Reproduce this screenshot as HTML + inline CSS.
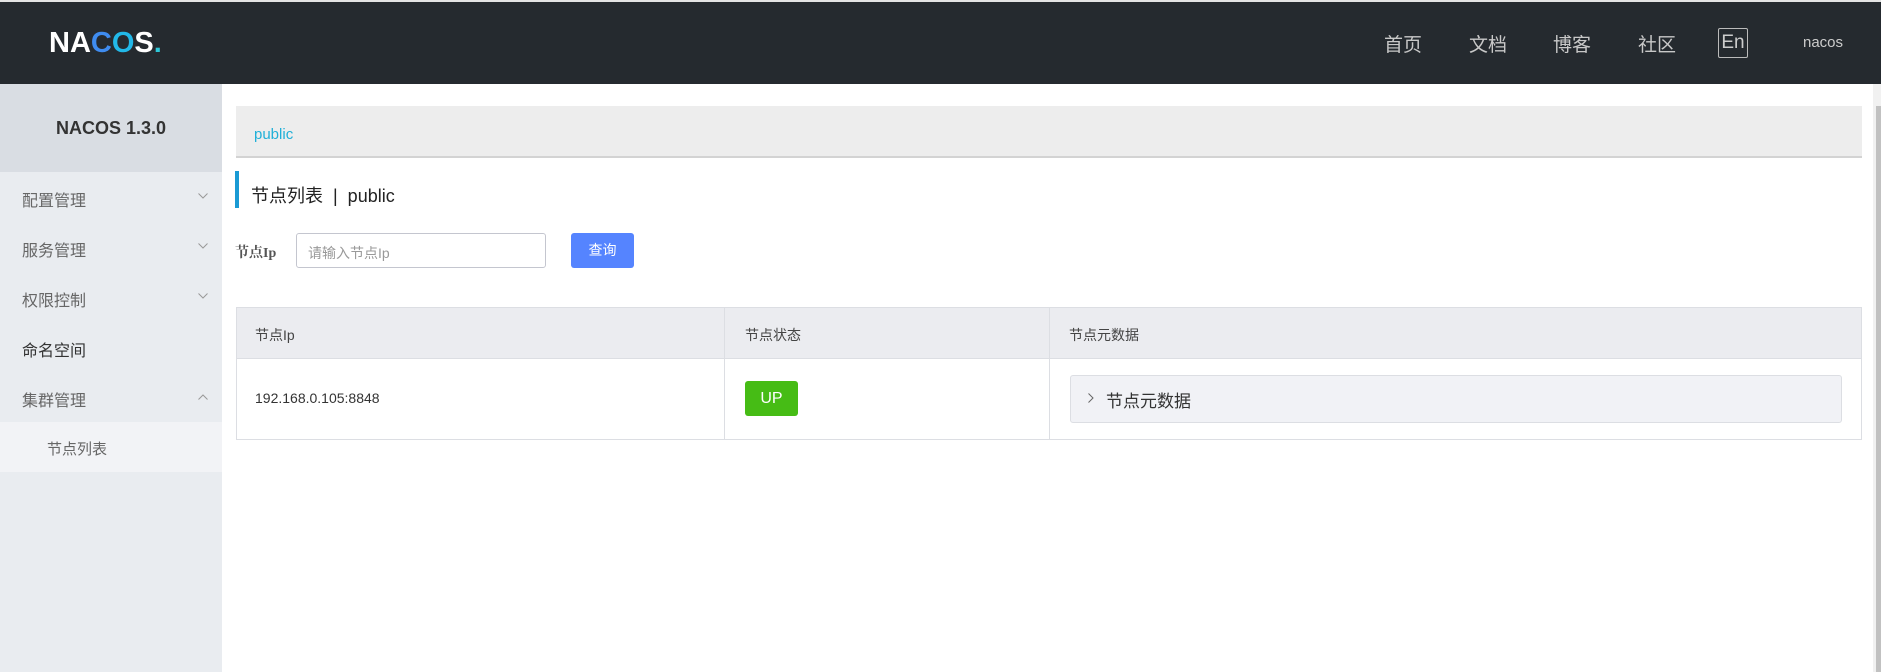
<!DOCTYPE html>
<html><head><meta charset="utf-8"><style>
*{box-sizing:border-box;margin:0;padding:0}
body{width:1881px;height:672px;overflow:hidden;background:#fff;font-family:"Liberation Sans","Noto Sans CJK SC",sans-serif;position:relative}
.a{position:absolute}
.hdr{left:0;top:0;width:1881px;height:84px;background:#252a2f;border-top:2px solid #e4e4e4}
.nav{color:#c8c8c8;font-size:19px;top:30px}
.side{left:0;top:84px;width:222px;height:588px;background:#e9ecf0}
.stitle{left:0;top:84px;width:222px;height:88px;background:#d9dde3;font-weight:bold;font-size:18px;color:#333;text-align:center;line-height:88px}
.mi{left:22px;font-size:16px;color:#666}
.ch{left:198px}
.th{font-size:14px;color:#444;top:325px}
</style></head><body>
<div class="a hdr"></div>
<div class="a" style="left:49px;top:27px;font-size:29px;font-weight:bold;letter-spacing:0px;color:#fff;font-family:'Liberation Sans',sans-serif">NA<span style="color:#3f8cf0">C</span><span style="color:#22b8e8">O</span>S<span style="color:#2ec7d8">.</span></div>
<div class="a nav" style="left:1384px">首页</div>
<div class="a nav" style="left:1469px">文档</div>
<div class="a nav" style="left:1553px">博客</div>
<div class="a nav" style="left:1638px">社区</div>
<div class="a" style="left:1718px;top:28px;width:30px;height:30px;border:1px solid #bbb;border-radius:2px;color:#ccc;font-size:19px;text-align:center;line-height:28px">En</div>
<div class="a" style="left:1803px;top:34px;color:#ccc;font-size:15px">nacos</div>

<div class="a side"></div>
<div class="a stitle">NACOS 1.3.0</div>
<div class="a mi" style="top:187px">配置管理</div><svg class="a ch" style="top:193px" width="10" height="6"><path d="M0.5 0.5L5 5L9.5 0.5" fill="none" stroke="#999" stroke-width="1"/></svg>
<div class="a mi" style="top:237px">服务管理</div><svg class="a ch" style="top:243px" width="10" height="6"><path d="M0.5 0.5L5 5L9.5 0.5" fill="none" stroke="#999" stroke-width="1"/></svg>
<div class="a mi" style="top:287px">权限控制</div><svg class="a ch" style="top:293px" width="10" height="6"><path d="M0.5 0.5L5 5L9.5 0.5" fill="none" stroke="#999" stroke-width="1"/></svg>
<div class="a mi" style="top:337px;color:#333">命名空间</div>
<div class="a mi" style="top:387px">集群管理</div><svg class="a ch" style="top:394px" width="10" height="6"><path d="M0.5 5.5L5 1L9.5 5.5" fill="none" stroke="#999" stroke-width="1"/></svg>
<div class="a" style="left:0;top:422px;width:222px;height:50px;background:#f2f3f6"></div>
<div class="a mi" style="left:47px;top:438px;font-size:15px">节点列表</div>

<div class="a" style="left:1873px;top:84px;width:8px;height:588px;background:#f1f1f1"></div>
<div class="a" style="left:1876px;top:106px;width:5px;height:566px;background:#c1c1c1"></div>

<div class="a" style="left:236px;top:106px;width:1626px;height:52px;background:#ededed;border-bottom:2px solid #d3d3d3"></div>
<div class="a" style="left:254px;top:126px;color:#21b0d8;font-size:15px">public</div>

<div class="a" style="left:235px;top:171px;width:4px;height:37px;background:#1a9ad4"></div>
<div class="a" style="left:251px;top:182px;font-size:18px;color:#222">节点列表 &nbsp;|&nbsp; public</div>

<div class="a" style="left:235px;top:242px;font-size:14px;font-weight:bold;color:#555;font-family:'Liberation Serif','Noto Serif CJK SC',serif">节点Ip</div>
<div class="a" style="left:296px;top:233px;width:250px;height:35px;border:1px solid #c4c6cf;border-radius:3px"></div>
<div class="a" style="left:308px;top:243px;font-size:14px;color:#999">请输入节点Ip</div>
<div class="a" style="left:571px;top:233px;width:63px;height:35px;background:#5584ff;border-radius:3px;color:#fff;font-size:14px;text-align:center;line-height:35px">查询</div>

<div class="a" style="left:236px;top:307px;width:1626px;height:133px;border:1px solid #dcdee3"></div>
<div class="a" style="left:237px;top:308px;width:1624px;height:51px;background:#ebecf0;border-bottom:1px solid #dcdee3"></div>
<div class="a" style="left:724px;top:308px;width:1px;height:131px;background:#dcdee3"></div>
<div class="a" style="left:1049px;top:308px;width:1px;height:131px;background:#dcdee3"></div>
<div class="a th" style="left:255px">节点Ip</div>
<div class="a th" style="left:745px">节点状态</div>
<div class="a th" style="left:1069px">节点元数据</div>
<div class="a" style="left:255px;top:390px;font-size:14px;color:#333">192.168.0.105:8848</div>
<div class="a" style="left:745px;top:381px;width:53px;height:35px;background:#46bc15;border-radius:3px;color:#fff;font-size:16px;text-align:center;line-height:35px">UP</div>
<div class="a" style="left:1070px;top:375px;width:772px;height:48px;background:#f1f2f6;border:1px solid #dcdee3;border-radius:3px"></div>
<svg class="a" style="left:1088px;top:393px" width="6" height="10"><path d="M0.5 0.5L5 5L0.5 9.5" fill="none" stroke="#666" stroke-width="1"/></svg>
<div class="a" style="left:1106px;top:387px;font-size:17px;color:#333">节点元数据</div>
</body></html>
